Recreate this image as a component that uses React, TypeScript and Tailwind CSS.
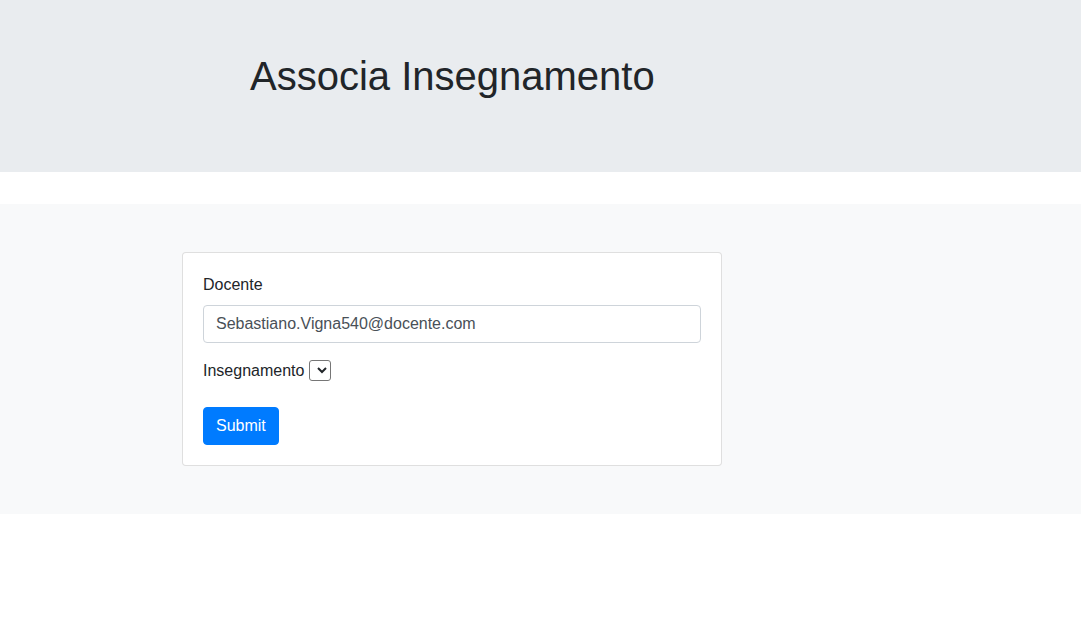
import React from "react";

function App() {
    return (
        <div className="min-h-screen bg-white text-[#212529] font-['Liberation_Sans',Arial,sans-serif] text-base">
            <div className="bg-[#e9ecef] h-[172px] mb-8 pt-[52px] pl-[250px]">
                <h1 className="text-[40px] leading-[48px] font-normal">Associa Insegnamento</h1>
            </div>
            <div className="bg-[#f8f9fa] py-12">
                <div className="ml-[182px] w-[540px] bg-white border border-[rgba(0,0,0,0.125)] rounded p-5">
                    <form onSubmit={(e) => e.preventDefault()}>
                        <div className="mb-4">
                            <label className="block mb-2 leading-6">Docente</label>
                            <input
                                type="text"
                                defaultValue="Sebastiano.Vigna540@docente.com"
                                className="block w-full h-[38px] px-3 py-1.5 border border-[#ced4da] rounded text-[#495057] leading-6"
                            />
                        </div>
                        <div className="mb-4 leading-6">
                            <label className="inline-block mb-2">Insegnamento</label>{" "}
                            <select className="inline-block align-middle w-[22px] h-[21px] border border-[#767676] rounded-[3px] text-[13px] bg-white appearance-auto -mt-[2px]">
                                <option></option>
                            </select>
                        </div>
                        <button
                            type="submit"
                            className="h-[38px] px-3 bg-[#007bff] border border-[#007bff] text-white rounded leading-6"
                        >
                            Submit
                        </button>
                    </form>
                </div>
            </div>
        </div>
    );
}

export default App;
